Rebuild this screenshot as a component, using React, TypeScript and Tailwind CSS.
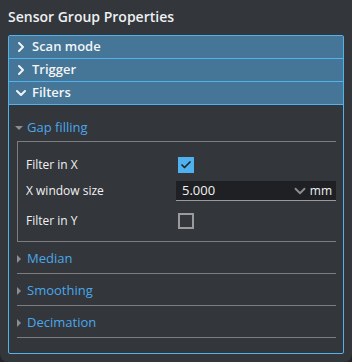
import { ChevronRight, ChevronDown, Check } from "lucide-react";

const closedSections = ["Scan mode", "Trigger"];
const subSections = ["Median", "Smoothing", "Decimation"];

function Caret({ open }: { open?: boolean }) {
  if (open) {
    return (
      <svg width="8" height="8" viewBox="0 0 8 8" className="-ml-[2px] shrink-0">
        <path d="M0 2 L8 2 L4 6 Z" fill="#8a8d91" />
      </svg>
    );
  }
  return (
    <svg width="4" height="8" viewBox="0 0 4 8" className="shrink-0">
      <path d="M0 0 L4 4 L0 8 Z" fill="#8a8d91" />
    </svg>
  );
}

export default function App() {
  return (
    <div className="h-[362px] w-[352px] bg-[#24262a] font-['Open_Sans',sans-serif]">
      <div className="flex h-full flex-col rounded-b-lg bg-[#33363b] px-2 pt-[7px]">
        <h1 className="text-[14px] leading-[20px] font-semibold text-[#eef0f2]">
          Sensor Group Properties
        </h1>

        <div className="mt-2 h-[319px] rounded-[2px] border border-[#52b2ec]">
          {closedSections.map((name) => (
            <div
              key={name}
              className="flex h-[23px] items-center gap-[3px] border-b border-[#52b2ec] bg-[#457597] pl-[4px] text-[13px] font-semibold text-[#f2f4f6]"
            >
              <ChevronRight size={16} strokeWidth={3} />
              {name}
            </div>
          ))}
          <div className="flex h-[23px] items-center gap-[3px] border-b border-[#52b2ec] bg-[#457597] pl-[4px] text-[13px] font-semibold text-[#f2f4f6]">
            <ChevronDown size={16} strokeWidth={3} />
            Filters
          </div>

          <div className="pl-2 pr-[7px]">
            <div className="flex h-[36px] items-center gap-[4px] pt-[9px] text-[13px] text-[#4aa8ea]">
              <Caret open />
              Gap filling
            </div>

            <div className="border-y border-l border-[#7b7d80] pt-[14px] pb-3 text-[12px] text-[#f0f1f2]">
              <div className="flex h-[17px] items-center">
                <span className="w-[160px] pl-2">Filter in X</span>
                <span className="flex h-4 w-4 items-center justify-center bg-[#4fb1ef]">
                  <Check size={12} strokeWidth={3.5} color="#22262b" />
                </span>
              </div>
              <div className="mt-[8px] flex h-[20px] items-center">
                <span className="w-[158px] pl-2">X window size</span>
                <div className="flex h-[20px] flex-1 items-center border-b border-[#9a9a9a] bg-[#1f2023] pl-[6px] pr-1">
                  <span className="flex-1 text-[13px]">5.000</span>
                  <ChevronDown size={18} strokeWidth={2.5} color="#8a8c8f" />
                  <span className="ml-[1px] text-[12px]">mm</span>
                </div>
              </div>
              <div className="mt-[11px] flex h-[17px] items-center">
                <span className="w-[160px] pl-2">Filter in Y</span>
                <span className="h-4 w-4 border-2 border-[#9b9b9b]" />
              </div>
            </div>

            {subSections.map((name) => (
              <div
                key={name}
                className="flex h-[32px] items-center gap-[6px] border-b border-[#7b7d80] pt-[2px] text-[13px] text-[#4aa8ea]"
              >
                <Caret />
                {name}
              </div>
            ))}
          </div>
        </div>
      </div>
    </div>
  );
}
